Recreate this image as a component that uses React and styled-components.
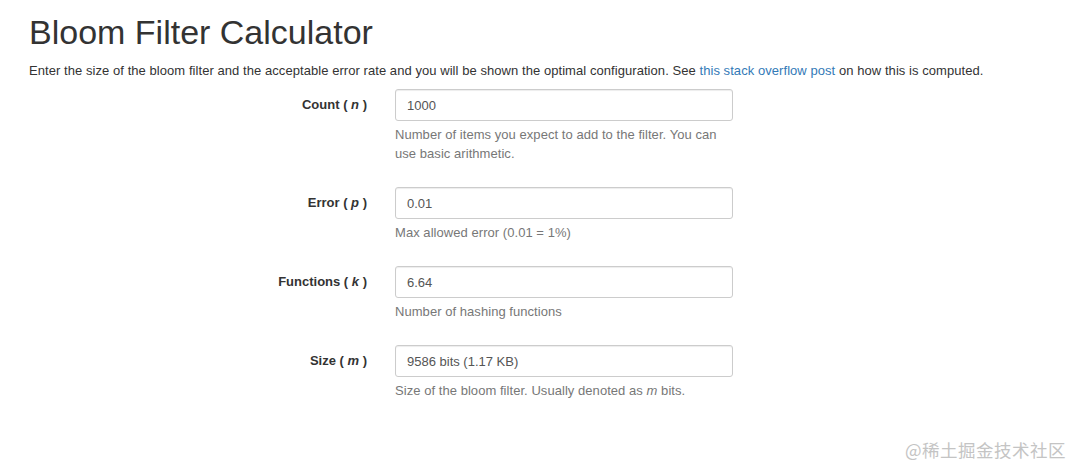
import styled, { createGlobalStyle } from "styled-components";

const GlobalStyle = createGlobalStyle`
  body {
    margin: 0;
    background: #fff;
    font-family: "Liberation Sans", Arial, sans-serif;
    color: #333;
  }
`;

const Page = styled.main`
  position: relative;
  width: 1080px;
  height: 474px;
  padding: 0 29px;
  box-sizing: border-box;
`;

const Title = styled.h1`
  margin: 0;
  padding-top: 12px;
  font-size: 34px;
  font-weight: 400;
  line-height: 40px;
  color: #333;
`;

const Intro = styled.p`
  margin: 9px 0 0;
  font-size: 13px;
  letter-spacing: 0.06px;
  line-height: 19px;
  color: #333;

  a {
    color: #337ab7;
    text-decoration: none;
  }
`;

const Form = styled.form`
  margin-top: 9px;
  display: flex;
  flex-direction: column;
  gap: 24px;
`;

const Row = styled.div`
  display: grid;
  grid-template-columns: 338px 338px;
  column-gap: 28px;
`;

const Label = styled.label`
  grid-row: 1;
  text-align: right;
  font-size: 13px;
  font-weight: 700;
  line-height: 32px;
  color: #333;

  i {
    font-style: italic;
  }
`;

const Input = styled.input.attrs({ type: "text", readOnly: true })`
  grid-column: 2;
  box-sizing: border-box;
  width: 338px;
  height: 32px;
  padding: 0 11px;
  border: 1px solid #ccc;
  border-radius: 3px;
  box-shadow: inset 0 1px 1px rgba(0, 0, 0, 0.075);
  font-family: "Liberation Sans", Arial, sans-serif;
  font-size: 13px;
  color: #555;
  &:focus {
    outline: none;
  }
`;

const Help = styled.span`
  grid-column: 2;
  margin-top: 4px;
  font-size: 13px;
  letter-spacing: 0.05px;
  line-height: 19px;
  color: #777;
`;

const Watermark = styled.div`
  position: absolute;
  right: 14px;
  bottom: 12px;
  font-family: "Noto Sans CJK SC", sans-serif;
  font-size: 17.5px;
  color: #c4c4c4;
  letter-spacing: 0.5px;
`;

const fields = [
  {
    id: "n",
    name: "Count",
    value: "1000",
    help: "Number of items you expect to add to the filter. You can use basic arithmetic.",
  },
  { id: "p", name: "Error", value: "0.01", help: "Max allowed error (0.01 = 1%)" },
  { id: "k", name: "Functions", value: "6.64", help: "Number of hashing functions" },
  {
    id: "m",
    name: "Size",
    value: "9586 bits (1.17 KB)",
    help: (
      <>
        Size of the bloom filter. Usually denoted as <i>m</i> bits.
      </>
    ),
  },
];

export default function App() {
  return (
    <>
      <GlobalStyle />
      <Page>
        <Title>Bloom Filter Calculator</Title>
        <Intro>
          Enter the size of the bloom filter and the acceptable error rate and you will be
          shown the optimal configuration. See <a href="#">this stack overflow post</a> on
          how this is computed.
        </Intro>
        <Form>
          {fields.map((f) => (
            <Row key={f.id}>
              <Label htmlFor={f.id}>
                {f.name} ( <i>{f.id}</i> )
              </Label>
              <Input id={f.id} defaultValue={f.value} />
              <Help>{f.help}</Help>
            </Row>
          ))}
        </Form>
        <Watermark>@稀土掘金技术社区</Watermark>
      </Page>
    </>
  );
}
